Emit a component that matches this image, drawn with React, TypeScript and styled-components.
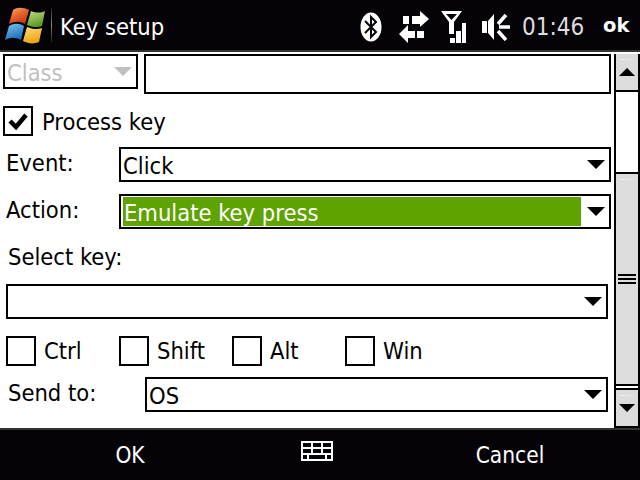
import styled, { createGlobalStyle } from "styled-components";

const GlobalStyle = createGlobalStyle`
    html, body {
        margin: 0;
        background: #050308;
    }
    * {
        box-sizing: border-box;
    }
`

const WindowsLogo = () => (
    <svg width="44" height="38" viewBox="0 0 44 38">
        <defs>
            <linearGradient id="red" x1="0" y1="0" x2="0.6" y2="1">
                <stop offset="0" stopColor="#f6b27a" />
                <stop offset="0.5" stopColor="#e8662a" />
                <stop offset="1" stopColor="#c8381c" />
            </linearGradient>
            <linearGradient id="green" x1="0" y1="0" x2="0.4" y2="1">
                <stop offset="0" stopColor="#c6dc8a" />
                <stop offset="1" stopColor="#5c9a20" />
            </linearGradient>
            <linearGradient id="blue" x1="0" y1="0" x2="0.4" y2="1">
                <stop offset="0" stopColor="#7cc8ee" />
                <stop offset="1" stopColor="#1c70c0" />
            </linearGradient>
            <linearGradient id="yellow" x1="0" y1="0" x2="0.4" y2="1">
                <stop offset="0" stopColor="#fbe27a" />
                <stop offset="1" stopColor="#f0a414" />
            </linearGradient>
        </defs>
        <path d="M10 3 C14 0 20 0 26 3 L22 17 C17 14 12 14 6 17 Z" fill="url(#red)" />
        <path d="M28 4 C33 6 38 6 42 4 L39 19 C34 21 29 20 24 18 Z" fill="url(#green)" />
        <path d="M6 19 C11 16 16 16 21 19 L18 33 C13 30 8 30 2 33 Z" fill="url(#blue)" />
        <path d="M24 20 C29 22 34 23 39 21 L36 35 C31 37 26 37 20 34 Z" fill="url(#yellow)" />
    </svg>
)

const BluetoothIcon = () => (
    <svg width="22" height="30" viewBox="0 0 22 30">
        <ellipse cx="11" cy="15" rx="10.5" ry="14.5" fill="#fff" />
        <path d="M5 9 L16 20 L11 25 L11 5 L16 10 L5 21" fill="none" stroke="#050308" strokeWidth="2" />
    </svg>
)

const TransferIcon = () => (
    <svg width="30" height="32" viewBox="0 0 30 32">
        <path d="M4 5 H10 V13 H4 Z M13 5 H21 V0 L30 8 L21 16 V13 H13 Z" fill="#fff" />
        <path d="M18 20 H25 V27 H18 Z M16 20 H9 V14 L0 23 L9 32 V27 H16 Z" fill="#fff" />
    </svg>
)

const SignalIcon = () => (
    <svg width="26" height="33" viewBox="0 0 26 33">
        <path d="M0 1 H21 L13 12 V24 H8 V12 Z M5 4 L10.500 10 L16 4 Z" fill="#fff" fillRule="evenodd" />
        <path d="M9 28 H14 V33 H9 Z M15 21 H20 V33 H15 Z M21 13 H25 V33 H21 Z" fill="#fff" />
    </svg>
)

const SpeakerIcon = () => (
    <svg width="28" height="28" viewBox="0 0 28 28">
        <path d="M0 8 H5 V20 H0 Z M6 8 L12 1 V27 L6 20 Z" fill="#fff" />
        <path d="M16 11 L24 2 M17 14 H28 M16 18 L24 27" fill="none" stroke="#fff" strokeWidth="3.500" />
    </svg>
)

const KeyboardIcon = () => (
    <svg width="32" height="20" viewBox="0 0 32 20">
        <path
            d="M1 1 H31 V19 H1 Z M1 7 H31 M1 13 H31 M11 1 V13 M21 1 V13 M7 13 V19 M25 13 V19"
            fill="none"
            stroke="#fff"
            strokeWidth="2"
        />
    </svg>
)

const App = () => {
    return (
        <Screen>
            <GlobalStyle />
            <TitleBar>
                <LogoSlot><WindowsLogo /></LogoSlot>
                <TitleDivider />
                <Title>Key setup</Title>
                <TrayIcons>
                    <BluetoothIcon />
                    <TransferIcon />
                    <SignalIcon />
                    <SpeakerIcon />
                </TrayIcons>
                <Clock>01:46</Clock>
                <OkText>ok</OkText>
            </TitleBar>
            <Body>
                <Form>
                    <TopRow>
                        <ComboBox $width={135}>
                            <ComboText $disabled>Class</ComboText>
                            <Arrow $color="#c0c0c0" />
                        </ComboBox>
                        <TextBox />
                    </TopRow>
                    <ProcessRow>
                        <CheckBox>
                            <svg width="26" height="26" viewBox="0 0 26 26">
                                <path d="M5 13 L11 19 L21 7" fill="none" stroke="#000" strokeWidth="4.500" />
                            </svg>
                        </CheckBox>
                        <ProcessText>Process key</ProcessText>
                    </ProcessRow>
                    <FieldRow $top={11} $left={6}>
                        <FieldLabel $width={113}>Event:</FieldLabel>
                        <ComboBox $width={492}>
                            <ComboText>Click</ComboText>
                            <Arrow />
                        </ComboBox>
                    </FieldRow>
                    <FieldRow $top={12} $left={6}>
                        <FieldLabel $width={113}>Action:</FieldLabel>
                        <ComboBox $width={492}>
                            <Selection>Emulate key press</Selection>
                            <Arrow />
                        </ComboBox>
                    </FieldRow>
                    <SelectKeyLabel>Select key:</SelectKeyLabel>
                    <FieldRow $top={13} $left={6}>
                        <ComboBox $width={602}>
                            <Arrow />
                        </ComboBox>
                    </FieldRow>
                    <ModifierRow>
                        {["Ctrl", "Shift", "Alt", "Win"].map((name) => (
                            <Modifier key={name}>
                                <CheckBox />
                                <RowText>{name}</RowText>
                            </Modifier>
                        ))}
                    </ModifierRow>
                    <FieldRow $top={11} $left={8}>
                        <FieldLabel $width={137}>Send to:</FieldLabel>
                        <ComboBox $width={463}>
                            <ComboText>OS</ComboText>
                            <Arrow />
                        </ComboBox>
                    </FieldRow>
                </Form>
                <ScrollBar>
                    <ScrollButton>
                        <ScrollArrow $up />
                    </ScrollButton>
                    <ScrollTrack />
                    <ScrollThumb>
                        <Grip />
                        <Grip />
                        <Grip />
                    </ScrollThumb>
                    <ThumbGap />
                    <ScrollButton>
                        <ScrollArrow />
                    </ScrollButton>
                </ScrollBar>
            </Body>
            <MenuBar>
                <MenuItem>OK</MenuItem>
                <KeyboardSlot><KeyboardIcon /></KeyboardSlot>
                <MenuItem>Cancel</MenuItem>
            </MenuBar>
        </Screen>
    );
};

export default App;

const FONT = `"DejaVu Sans Condensed", "DejaVu Sans", "Liberation Sans", sans-serif`

const Screen = styled.div`
    width: 640px;
    height: 480px;
    display: flex;
    flex-direction: column;
    overflow: hidden;
    background: #fff;
    color: #000;
    font-family: ${FONT};
    font-size: 23.5px;
`

const TitleBar = styled.header`
    height: 52px;
    flex: none;
    display: flex;
    align-items: center;
    background: #050308;
    border-bottom: 2px solid #333;
    color: #fff;
`

const LogoSlot = styled.div`
    width: 51px;
    height: 50px;
    padding: 7px 0 0 3px;
`

const TitleDivider = styled.div`
    width: 1px;
    height: 34px;
    background: linear-gradient(#222, #888 50%, #222);
`

const Title = styled.h1`
    flex: 1;
    margin: 4px 0 0 8px;
    font-size: 23.5px;
    font-weight: 400;
`

const TrayIcons = styled.div`
    display: grid;
    grid-template-columns: 39px 42px 41px auto;
    align-items: center;
    width: 162px;
    margin-top: 3px;
`

const Clock = styled.span`
    width: 81px;
    margin-top: 3px;
    color: #ddd;
    font-size: 24px;
`

const OkText = styled.span`
    width: 37px;
    margin-top: 1px;
    font-family: "DejaVu Sans", sans-serif;
    font-size: 19.5px;
    font-weight: 700;
`

const Body = styled.main`
    flex: 1;
    display: flex;
    padding-top: 2px;
`

const Form = styled.div`
    width: 614px;
`

const TopRow = styled.div`
    display: flex;
    align-items: flex-start;
    gap: 6px;
    padding-left: 3px;
`

const ComboBox = styled.div<{ $width: number }>`
    position: relative;
    width: ${(p) => p.$width}px;
    height: 35px;
    display: flex;
    align-items: center;
    padding: 1px 2px;
    border: 2px solid #000;
    background: #fff;
`

const ComboText = styled.span<{ $disabled?: boolean }>`
    margin-top: 2px;
    color: ${(p) => (p.$disabled ? "#c0c0c0" : "#000")};
`

const Selection = styled.span`
    width: 458px;
    height: 29px;
    padding: 2px 0 0 1px;
    line-height: 29px;
    background: #5fa300;
    color: #fff;
`

const Arrow = styled.i<{ $color?: string }>`
    position: absolute;
    right: 4px;
    top: 11px;
    width: 0;
    height: 0;
    border-left: 9px solid transparent;
    border-right: 9px solid transparent;
    border-top: 9px solid ${(p) => p.$color ?? "#000"};
`

const TextBox = styled.div`
    width: 467px;
    height: 40px;
    border: 2px solid #000;
`

const ProcessRow = styled.label`
    display: flex;
    align-items: center;
    gap: 9px;
    height: 30px;
    margin-top: 12px;
    padding-left: 3px;
`

const CheckBox = styled.span`
    width: 30px;
    height: 30px;
    flex: none;
    border: 2px solid #000;
`

const RowText = styled.span`
    white-space: nowrap;
`

const ProcessText = styled(RowText)`
    margin-top: 2px;
`

const FieldRow = styled.div<{ $top: number; $left: number }>`
    display: flex;
    align-items: center;
    margin-top: ${(p) => p.$top}px;
    padding-left: ${(p) => p.$left}px;
`

const FieldLabel = styled.span<{ $width: number }>`
    width: ${(p) => p.$width}px;
    flex: none;
    margin-top: -3px;
`

const SelectKeyLabel = styled.div`
    height: 28px;
    line-height: 28px;
    margin-top: 14px;
    padding-left: 8px;
`

const ModifierRow = styled.div`
    display: grid;
    grid-template-columns: repeat(4, 113px);
    margin-top: 17px;
    padding-left: 6px;
`

const Modifier = styled.label`
    display: flex;
    align-items: center;
    gap: 8px;
    height: 30px;
`

const ScrollBar = styled.aside`
    width: 26px;
    height: 374px;
    display: flex;
    flex-direction: column;
    border-left: 2px solid #000;
    border-right: 2px solid #000;
`

const ScrollButton = styled.div`
    position: relative;
    height: 38px;
    flex: none;
    display: flex;
    align-items: center;
    justify-content: center;
    background: #dcdcdc;
    border-bottom: 2px solid #000;

    &::before {
        content: "";
        position: absolute;
        left: 4px;
        right: 4px;
        top: 5px;
        border-top: 1px dotted #f4f4f4;
    }
`

const ScrollArrow = styled.i<{ $up?: boolean }>`
    width: 0;
    height: 0;
    border-left: 8px solid transparent;
    border-right: 8px solid transparent;
    ${(p) => (p.$up ? "border-bottom: 8px solid #000;" : "border-top: 8px solid #000;")}
`

const ScrollTrack = styled.div`
    height: 80px;
    flex: none;
    background: #fff;
`

const ScrollThumb = styled.div`
    position: relative;
    height: 214px;
    flex: none;
    display: flex;
    flex-direction: column;
    justify-content: center;
    gap: 2px;
    padding: 0 2px;
    background: #dcdcdc;
    border-top: 2px solid #000;
    border-bottom: 2px solid #000;

    &::before {
        content: "";
        position: absolute;
        left: 4px;
        right: 4px;
        top: 5px;
        border-top: 1px dotted #f4f4f4;
    }
`

const Grip = styled.div`
    height: 2px;
    background: #000;
`

const ThumbGap = styled.div`
    height: 2px;
    flex: none;
    background: #fff;
    box-shadow: 0 2px 0 #000;
    margin-bottom: 2px;
`

const MenuBar = styled.footer`
    height: 52px;
    flex: none;
    display: grid;
    grid-template-columns: 260px 120px 260px;
    align-items: center;
    background: #050308;
    border-top: 2px solid #333;
    color: #fff;
`

const MenuItem = styled.span`
    text-align: center;
    font-size: 22.5px;
`

const KeyboardSlot = styled.div`
    display: flex;
    justify-content: center;
    margin: -9px 6px 0 0;
`
